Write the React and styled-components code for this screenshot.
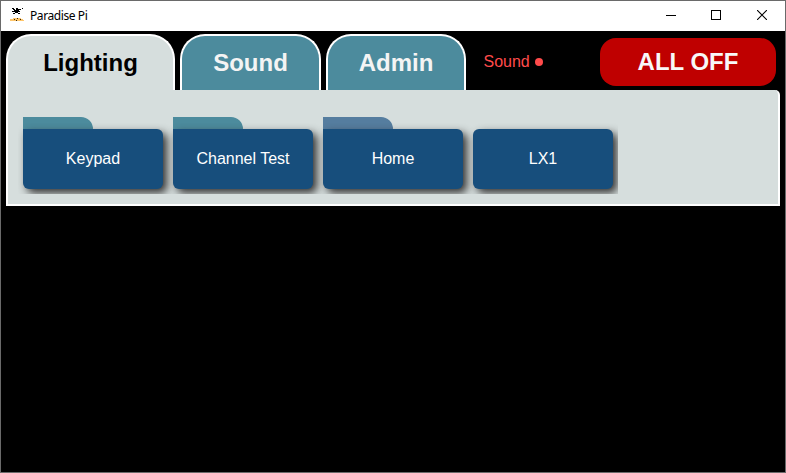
import React from "react";
import styled, { createGlobalStyle } from "styled-components";

const GlobalStyle = createGlobalStyle`
  * { box-sizing: border-box; }
  html, body, #root { height: 100%; }
  body { margin: 0; background: #000; overflow: hidden; font-family: "Liberation Sans", Arial, sans-serif; }
`;

const Window = styled.div`
  display: flex;
  flex-direction: column;
  height: 100%;
  border: 1px solid #6a6a6a;
  background: #000;
`;

const TitleBar = styled.header`
  display: flex;
  align-items: center;
  flex: none;
  height: 30px;
  padding-left: 8px;
  background: #fff;
  color: #000;
`;

const AppIcon = styled.svg`
  display: block;
  flex: none;
  width: 16px;
  height: 16px;
`;

const Title = styled.span`
  flex: 1;
  margin-left: 5px;
  font: 12px/16px "Noto Sans", "Open Sans", sans-serif;
  letter-spacing: -0.41px;
`;

const WindowButton = styled.button`
  display: flex;
  align-items: center;
  justify-content: center;
  width: ${(p) => p.$width}px;
  height: 28px;
  padding: 0 0 2px;
  border: 0;
  background: transparent;

  svg { display: block; }
`;

const Content = styled.main`
  padding: 3px 5px 0;
`;

const TopBar = styled.div`
  display: flex;
  height: 56px;
`;

const Tab = styled.button`
  width: ${(p) => p.$width}px;
  height: 56px;
  margin-right: 5px;
  padding: 0 0 1px;
  border: 2px solid #fff;
  border-bottom: 0;
  border-radius: 25px 25px 0 0;
  background: ${(p) => (p.$active ? "#d6dedd" : "#4c8b9d")};
  color: ${(p) => (p.$active ? "#000" : "#f4f4f4")};
  font: bold 24px/28px "Liberation Sans", Arial, sans-serif;
`;

const Status = styled.div`
  display: flex;
  align-items: center;
  margin-left: 12.5px;
  padding-bottom: 1px;
  color: #ff4b4b;
  font-size: 16px;
  line-height: 18px;
`;

const StatusDot = styled.i`
  width: 8px;
  height: 8px;
  margin: 1px 0 0 5px;
  border-radius: 50%;
  background: #ff4b4b;
`;

const AllOff = styled.button`
  width: 176px;
  height: 48px;
  margin: 4px 4px 0 auto;
  padding: 0;
  border: 0;
  border-radius: 16px;
  background: #bf0000;
  color: #f8f8f8;
  font: bold 24px/28px "Liberation Sans", Arial, sans-serif;
`;

const Panel = styled.section`
  display: flex;
  width: 774px;
  height: 116px;
  padding: 27px 0 0 10px;
  border: 2px solid #fff;
  border-top: 0;
  border-radius: 0 5px 0 0;
  background: #d6dedd;
`;

const Items = styled.div`
  display: flex;
  gap: 10px;
  height: 77px;
  padding: 0 5px;
  overflow: hidden;
`;

const Item = styled.div`
  width: 140px;
`;

const FolderTab = styled.div`
  width: 70px;
  height: 12px;
  border-radius: 0 12px 0 0;
  background: ${(p) => p.$color};
`;

const ItemButton = styled.button`
  display: block;
  width: 140px;
  height: 60px;
  padding: 0;
  border: 0;
  border-radius: ${(p) => (p.$folder ? "0 6px 6px 6px" : "6px")};
  background: #174e7c;
  color: #fff;
  font: 16px/18px "Liberation Sans", Arial, sans-serif;
  box-shadow: 4px 4px 8px #333;
`;

const tabs = [
  { label: "Lighting", width: 169, active: true },
  { label: "Sound", width: 141 },
  { label: "Admin", width: 140 },
];

const items = [
  { label: "Keypad", folder: "#4c8b9d" },
  { label: "Channel Test", folder: "#4c8b9d" },
  { label: "Home", folder: "#557d9f" },
  { label: "LX1" },
];

export default function App() {
  return (
    <>
      <GlobalStyle />
      <Window>
        <TitleBar>
          <AppIcon viewBox="0 0 16 16" shapeRendering="crispEdges" aria-hidden="true">
            <path fill="#000" d="M3 0h2v1H3zM7 0h2v1H7zM13 0h1v1h-1zM4 1h2v1H4zM7 1h5v1H7zM5 2h5v1H5zM3 3h8v1H3zM6 4h3v1H6zM4 5h2v1H4zM9 5h2v1H9z" />
            <path fill="#ffc66a" d="M4 10h8v1H4zM1 11h13v1H1zM1 12h14v1H1z" />
            <path fill="#3a2a12" d="M5 11h1v1H5zM8 10h1v1H8zM7 12h1v1H7zM11 11h1v1h-1z" />
          </AppIcon>
          <Title>Paradise Pi</Title>
          <WindowButton $width={46} aria-label="Minimize">
            <svg width="10" height="10" shapeRendering="crispEdges"><path d="M0 5h10v1H0z" /></svg>
          </WindowButton>
          <WindowButton $width={44} aria-label="Maximize">
            <svg width="10" height="10" shapeRendering="crispEdges"><path d="M.5 .5h9v9h-9z" fill="none" stroke="#000" /></svg>
          </WindowButton>
          <WindowButton $width={47} aria-label="Close">
            <svg width="10" height="10"><path d="M0 0L10 10M10 0L0 10" stroke="#000" strokeWidth="1.1" /></svg>
          </WindowButton>
        </TitleBar>
        <Content>
          <TopBar>
            {tabs.map((t) => (
              <Tab key={t.label} $width={t.width} $active={t.active}>{t.label}</Tab>
            ))}
            <Status>Sound<StatusDot /></Status>
            <AllOff>ALL OFF</AllOff>
          </TopBar>
          <Panel>
            <Items>
              {items.map((it) => (
                <Item key={it.label}>
                  <FolderTab $color={it.folder || "transparent"} />
                  <ItemButton $folder={Boolean(it.folder)}>{it.label}</ItemButton>
                </Item>
              ))}
            </Items>
          </Panel>
        </Content>
      </Window>
    </>
  );
}
